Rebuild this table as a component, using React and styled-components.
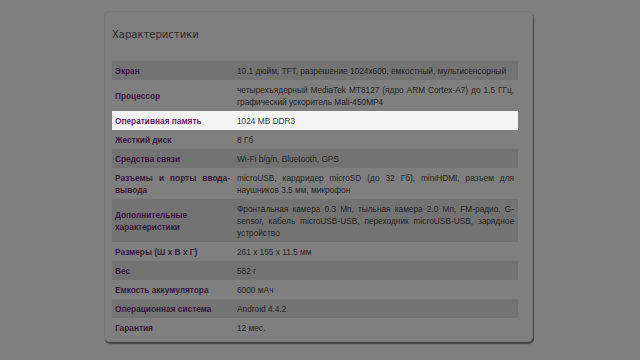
import styled, { createGlobalStyle } from "styled-components";

const specs = [
    { name: "Экран", value: "10.1 дюйм, TFT, разрешение 1024x600, емкостный, мультисенсорный" },
    { name: "Процессор", value: "четырехъядерный MediaTek MT8127 (ядро ARM Cortex-A7) до 1.5 ГГц, графический ускоритель Mali-450MP4" },
    { name: "Оперативная память", value: "1024 MB DDR3", active: true },
    { name: "Жесткий диск", value: "8 Гб" },
    { name: "Средства связи", value: "Wi-Fi b/g/n, Bluetooth, GPS" },
    { name: "Разъемы и порты ввода-вывода", value: "microUSB, кардридер microSD (до 32 Гб), miniHDMI, разъем для наушников 3.5 мм, микрофон" },
    { name: "Дополнительные характеристики", value: "Фронтальная камера 0.3 Мп, тыльная камера 2.0 Мп, FM-радио, G-sensor, кабель microUSB-USB, переходник microUSB-USB, зарядное устройство" },
    { name: "Размеры (Ш x В x Г)", value: "261 x 155 x 11.5 мм" },
    { name: "Вес", value: "582 г" },
    { name: "Емкость аккумулятора", value: "6000 мАч" },
    { name: "Операционная система", value: "Android 4.4.2" },
    { name: "Гарантия", value: "12 мес." },
];

export default function App() {
    return (
        <>
            <GlobalStyle />
            <Page>
                <Card>
                    <Title>Характеристики</Title>
                    <SpecTable>
                        <tbody>
                            {specs.map((s, i) => (
                                <Row key={s.name} $striped={i % 2 === 0} $active={s.active}>
                                    <Label $active={s.active}>{s.name}</Label>
                                    <Value $active={s.active}>{s.value}</Value>
                                </Row>
                            ))}
                        </tbody>
                    </SpecTable>
                </Card>
            </Page>
        </>
    );
}

const GlobalStyle = createGlobalStyle`
    html, body {
        margin: 0;
        padding: 0;
        background: #7f7f7f;
    }
`;

const Page = styled.div`
    width: 640px;
    height: 360px;
    padding-top: 11px;
    box-sizing: border-box;
    display: flex;
    justify-content: center;
    background: #7f7f7f;
    overflow: hidden;
`;

const Card = styled.div`
    width: 429px;
    height: 331px;
    box-sizing: border-box;
    margin-left: -3px;
    padding: 17px 16px 0 7px;
    background: #7f7f7f;
    border: 1px solid #787878;
    border-radius: 5px;
    box-shadow: 1px 2px 1px rgba(0, 0, 0, 0.45);
`;

const Title = styled.h2`
    margin: 0 0 20px;
    font-family: "DejaVu Sans", sans-serif;
    font-weight: 400;
    font-size: 10px;
    line-height: 12px;
    color: #2b2b2b;
`;

const SpecTable = styled.table`
    width: 406px;
    border-collapse: collapse;
    font-family: "Liberation Sans", Arial, sans-serif;
    font-size: 8.3px;
    line-height: 12px;
`;

const Row = styled.tr`
    background: ${(p) => (p.$active ? "#f4f4f4" : p.$striped ? "#737373" : "transparent")};
`;

const Label = styled.td`
    width: 115px;
    padding: 4px 4px 3px 3px;
    vertical-align: middle;
    text-align: justify;
    font-weight: 700;
    color: ${(p) => (p.$active ? "#64246a" : "#3a1a3c")};
`;

const Value = styled.td`
    padding: 4px 4px 3px 3px;
    vertical-align: middle;
    text-align: justify;
    color: ${(p) => (p.$active ? "#3a3a3a" : "#252525")};
`;
